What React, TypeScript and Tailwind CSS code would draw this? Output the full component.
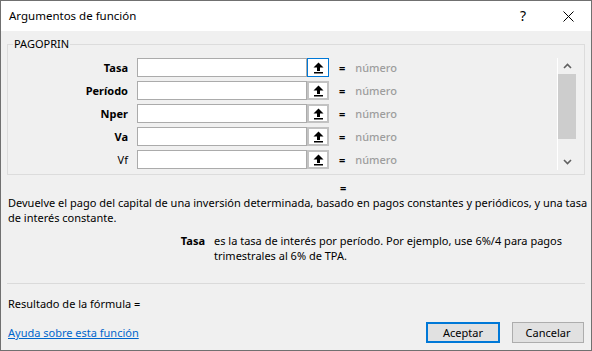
import React from "react";

const font = { fontFamily: '"Segoe UI", "Noto Sans", "Open Sans", sans-serif' };

function UpIcon() {
  return (
    <svg width="11" height="12" viewBox="0 0 11 12">
      <polygon points="5.5,0.5 10.5,5.5 0.5,5.5" fill="#000" />
      <rect x="4" y="5" width="3" height="4" fill="#000" />
      <rect x="1" y="10" width="9" height="1.5" fill="#000" />
    </svg>
  );
}

function Row({ label, bold, focused }: { label: string; bold: boolean; focused?: boolean }) {
  return (
    <div className="flex items-center h-[19px]">
      <div className={`w-[120px] text-right text-[11px] leading-[15px] text-black ${bold ? "font-bold" : ""}`}>{label}</div>
      <div className="ml-[9px] w-[170px] h-[19px] bg-white border border-[#ababab]" />
      <div
        className={`w-[22px] h-[19px] bg-white flex items-center justify-center ${
          focused ? "border border-[#0078d7]" : "border-2 border-[#c2c2c2]"
        }`}
      >
        <UpIcon />
      </div>
      <div className="ml-[10px] text-[11px] leading-[15px] font-bold text-black">=</div>
      <div className="ml-[10px] text-[11px] leading-[15px] font-medium text-[#9d9d9d]">número</div>
    </div>
  );
}

export default function App() {
  return (
    <div
      className="w-[592px] h-[351px] bg-[#f0f0f0] border border-[#707070] flex flex-col text-black overflow-hidden whitespace-nowrap"
      style={font}
    >
      {/* Title bar */}
      <div className="h-[30px] bg-white flex items-center pl-[8px] shrink-0">
        <div className="text-[11.5px] leading-none">Argumentos de función</div>
        <div className="flex-1" />
        <div className="text-[14px] leading-none mr-[37px]">?</div>
        <svg width="11" height="11" viewBox="0 0 11 11" className="mr-[17px]">
          <path d="M0.5 0.5 L10.5 10.5 M10.5 0.5 L0.5 10.5" stroke="#000" strokeWidth="1" />
        </svg>
      </div>

      <div className="px-[6px] flex flex-col">
        {/* Group box */}
        <div className="relative mt-[13px] h-[131px] shrink-0 border border-[#dcdcdc] flex pt-[13px] pr-[8px]">
          <span className="absolute left-[5px] top-[-9px] px-[1px] bg-[#f0f0f0] text-[11px] leading-[16px]">PAGOPRIN</span>
          <div className="flex-1 flex flex-col gap-[4px]">
            <Row label="Tasa" bold focused />
            <Row label="Período" bold />
            <Row label="Nper" bold />
            <Row label="Va" bold />
            <Row label="Vf" bold={false} />
          </div>
          <div className="w-[19px] h-[112px] border-l border-white flex flex-col items-center">
            <div className="h-[16px] flex items-center justify-center">
              <svg width="9" height="6" viewBox="0 0 9 6">
                <polyline points="1,5 4.5,1.5 8,5" fill="none" stroke="#606060" strokeWidth="1.6" />
              </svg>
            </div>
            <div className="w-full h-[65px] bg-[#cdcdcd]" />
            <div className="flex-1" />
            <div className="h-[16px] flex items-center justify-center">
              <svg width="9" height="6" viewBox="0 0 9 6">
                <polyline points="1,1 4.5,4.5 8,1" fill="none" stroke="#606060" strokeWidth="1.6" />
              </svg>
            </div>
          </div>
        </div>

        {/* = */}
        <div className="mt-[5px] h-[15px] leading-[15px] text-[11px] font-bold pl-[333px]">=</div>

        {/* Description */}
        <div className="text-[11px] leading-[15px] pl-[1px]">
          Devuelve el pago del capital de una inversión determinada, basado en pagos constantes y periódicos, y una tasa
          <br />
          de interés constante.
        </div>

        <div className="mt-[8px] flex text-[11px] leading-[15px]">
          <div className="w-[198px] text-right font-bold">Tasa</div>
          <div className="ml-[9px]">
            es la tasa de interés por período. Por ejemplo, use 6%/4 para pagos
            <br />
            trimestrales al 6% de TPA.
          </div>
        </div>

        <div className="mt-[20px] h-px bg-[#dadada]" />

        <div className="mt-[12px] text-[11px] leading-[15px] pl-[1px]">Resultado de la fórmula =</div>

        <div className="mt-[11px] flex items-center">
          <a className="pl-[1px] text-[11px] leading-[15px] text-[#0066cc] underline">Ayuda sobre esta función</a>
          <div className="flex-1" />
          <button className="w-[74px] h-[21px] border-2 border-[#0078d7] bg-[#e1e1e1] text-[11px] leading-none">
            Aceptar
          </button>
          <button className="ml-[12px] mr-[1px] w-[72px] h-[21px] border border-[#adadad] bg-[#e1e1e1] text-[11px] leading-none">
            Cancelar
          </button>
        </div>
      </div>
    </div>
  );
}
